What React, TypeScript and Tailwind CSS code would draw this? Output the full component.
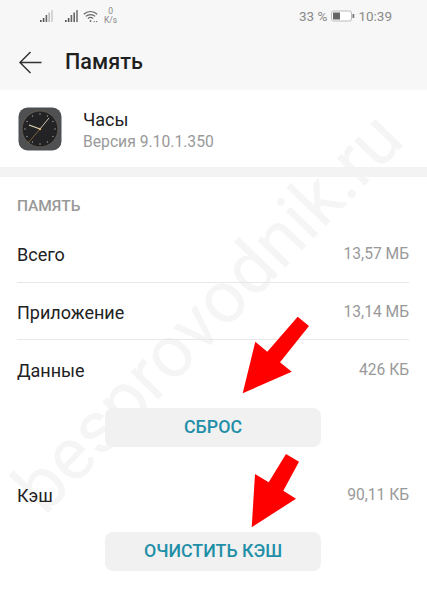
const font = { fontFamily: "Roboto, 'Noto Sans', sans-serif" }

const SignalIcon = ({ faded }: { faded?: boolean }) => (
    <svg width="14" height="13" viewBox="0 0 14 13">
        <rect x="0" y="10" width="1.6" height="2" fill="#555" />
        <rect x="2.8" y="8" width="1.6" height="4" fill="#555" />
        <rect x="5.6" y="5" width="1.6" height="7" fill="#666" />
        <rect x="8.4" y="2.5" width="1.6" height="9.5" fill={faded ? "#bbb" : "#666"} />
        <rect x="11.2" y="0" width="1.6" height="12" fill={faded ? "#ccc" : "#777"} />
    </svg>
)

const WifiIcon = () => (
    <svg width="15" height="13" viewBox="0 0 15 13" fill="none" stroke="#666" strokeWidth="1.2">
        <path d="M0.8 4.2C4.5 0.6 10.5 0.6 14.2 4.2" />
        <path d="M2.8 6.4C5.4 4 9.6 4 12.2 6.4" />
        <path d="M4.9 8.6C6.3 7.4 8.7 7.4 10.1 8.6" />
        <circle cx="7.5" cy="11" r="0.9" fill="#666" stroke="none" />
        <circle cx="11.2" cy="11.6" r="0.7" fill="#666" stroke="none" />
        <circle cx="13.6" cy="11.6" r="0.7" fill="#666" stroke="none" />
    </svg>
)

const BatteryIcon = () => (
    <svg width="24" height="12" viewBox="0 0 24 12">
        <rect x="0.5" y="1" width="20" height="10" rx="2" fill="#fff" stroke="#bbb" />
        <rect x="2" y="2.5" width="7" height="7" fill="#666" />
        <rect x="21.5" y="4" width="1.8" height="4" fill="#777" />
    </svg>
)

const ClockIcon = () => (
    <svg width="44" height="44" viewBox="0 0 44 44">
        <rect x="0.5" y="0.5" width="43" height="43" rx="9" fill="#4f5052" />
        <circle cx="22" cy="22" r="18" fill="#232325" stroke="#6b6252" strokeWidth="0.8" />
        {[0, 30, 60, 90, 120, 150, 180, 210, 240, 270, 300, 330].map((a) => (
            <circle key={a} cx="22" cy="7" r="0.7" fill="#a9a9a9" transform={`rotate(${a} 22 22)`} />
        ))}
        <path d="M22 22L11 18" stroke="#e6d9b8" strokeWidth="1.2" />
        <path d="M22 22L31 11" stroke="#c9c2ae" strokeWidth="1" />
        <path d="M22 22L10 36" stroke="#b08a45" strokeWidth="0.6" />
        <circle cx="22" cy="22" r="1.2" fill="#d8b878" />
    </svg>
)

const Row = ({ label, value, divider, lower }: { label: string; value: string; divider?: boolean; lower?: boolean }) => (
    <div className={`flex justify-between items-center h-[57.5px] ${lower ? "pt-[3px]" : "pb-[2px]"} ${divider ? "border-b border-[#e8e8e8]" : ""}`}>
        <span className="text-[18px] text-[#222]">{label}</span>
        <span className="text-[15.6px] text-[#999]">{value}</span>
    </div>
)

const Action = ({ label }: { label: string }) => (
    <button className="block w-[216px] h-[39px] ml-[105px] rounded-lg bg-[#f1f1f1] text-[17.8px] font-medium text-[#1f8fa8]">
        {label}
    </button>
)

export default function App() {
    return (
        <div className="relative w-[427px] h-[614px] overflow-hidden bg-white" style={font}>
            {/* watermark */}
            <div className="absolute left-[-92px] top-[276px] w-[600px] text-center text-[73px] leading-none text-[#f5f5f5] -rotate-[46deg] pointer-events-none select-none">
                besprovodnik.ru
            </div>

            <div className="relative">
                <div className="bg-[#f7f7f7] h-[90px]">
                    <div className="flex items-center h-[31px] pt-[1px]">
                        <div className="flex items-center ml-[40px]">
                            <SignalIcon faded />
                        </div>
                        <div className="flex items-center ml-[11px] gap-[4px]">
                            <SignalIcon />
                            <WifiIcon />
                        </div>
                        <div className="flex flex-col items-center ml-[6px] text-[8.5px] leading-[9px] text-[#888]">
                            <span>0</span>
                            <span>K/s</span>
                        </div>
                        <div className="flex items-center ml-auto mr-[35px] text-[13.5px] text-[#8a8a8a]">
                            <span>33 %</span>
                            <span className="ml-[4px] mr-[3px] flex"><BatteryIcon /></span>
                            <span>10:39</span>
                        </div>
                    </div>
                    <div className="flex items-center h-[32px] mt-[15px] pl-[19px]">
                        <svg width="23" height="23" viewBox="0 0 23 23" fill="none" stroke="#333" strokeWidth="1.5">
                            <path d="M22.5 11.5H1.5M11.5 1L1 11.5L11.5 22" />
                        </svg>
                        <span className="ml-[23px] text-[21.6px] font-medium text-[#1f1f1f]">Память</span>
                    </div>
                </div>

                <div className="flex items-center h-[77px] pl-[18px]">
                    <ClockIcon />
                    <div className="ml-[21px] pt-[3px]">
                        <div className="text-[18px] leading-[23px] text-[#222]">Часы</div>
                        <div className="text-[15.7px] leading-[22px] text-[#999]">Версия 9.10.1.350</div>
                    </div>
                </div>
                <div className="h-[10px] bg-[#f3f3f3]" />

                <div className="pl-[17px] pr-[18px]">
                    <div className="h-[48px] pt-[12px] flex items-center text-[15.5px] font-medium text-[#999]">ПАМЯТЬ</div>
                    <Row label="Всего" value="13,57 МБ" divider lower />
                    <Row label="Приложение" value="13,14 МБ" divider lower />
                    <Row label="Данные" value="426 КБ" lower />
                </div>
                <div className="mt-[10px]">
                    <Action label="СБРОС" />
                </div>
                <div className="pl-[17px] pr-[18px] mt-[21px]">
                    <Row label="Кэш" value="90,11 КБ" />
                </div>
                <div className="mt-[7px]">
                    <Action label="ОЧИСТИТЬ КЭШ" />
                </div>
            </div>

            {/* arrows */}
            <svg className="absolute left-0 top-0 pointer-events-none" width="427" height="614">
                <polygon fill="#ff0000" points="242.7,393.3 291.7,371.7 280,362.3 309,326 297.7,316.7 267.3,351.7 255.3,341.7" />
                <polygon fill="#ff0000" points="251.7,527.3 296,498.7 283.3,490.7 299,461.7 286,454 268.7,482.3 255,474" />
            </svg>
        </div>
    )
}
